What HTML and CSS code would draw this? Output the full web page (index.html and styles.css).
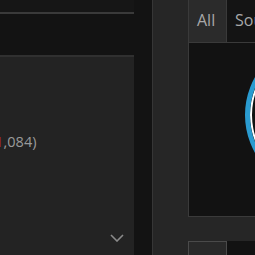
FILE: index.html
```html
<!DOCTYPE html>
<html>
<head>
<meta charset="utf-8">
<link rel="stylesheet" href="styles.css">
</head>
<body>
<div class="left">
  <div class="lt-top"></div>
  <div class="lt-mid"></div>
  <div class="card">
    <div class="count">(<span class="red">1</span>,084)</div>
    <svg class="chev" width="14" height="8" viewBox="0 0 14 8"><path d="M1 1 L7 7 L13 1" fill="none" stroke="#8a8a8a" stroke-width="1.6"/></svg>
  </div>
</div>
<div class="gap"></div>
<div class="right">
  <div class="tabs">
    <div class="tab active">All</div>
    <div class="tab">Sources</div>
  </div>
  <div class="box">
    <div class="ring"></div>
  </div>
  <div class="spacer"></div>
  <div class="tabs tabs2">
    <div class="tab active"></div>
    <div class="tab"></div>
  </div>
</div>
</body>
</html>
```
FILE: styles.css
```css
html, body {
  margin: 0;
  padding: 0;
}
body {
  width: 255px;
  height: 255px;
  overflow: hidden;
  display: flex;
  background: #131313;
  font-family: "Open Sans", "DejaVu Sans", sans-serif;
}
.left {
  width: 134px;
  flex: none;
  display: flex;
  flex-direction: column;
}
.lt-top {
  height: 12px;
  background: #161616;
  border-bottom: 2px solid #3a3a3a;
}
.lt-mid {
  height: 41px;
  background: #131313;
}
.card {
  flex: 1;
  background: #232323;
  border-top: 2px solid #303030;
  display: flex;
  flex-direction: column;
}
.count {
  margin-top: 75px;
  margin-left: -9px;
  font-size: 14.5px;
  color: #9a9a9a;
  white-space: nowrap;
}
.red {
  color: #a82a2a;
}
.chev {
  margin-top: auto;
  margin-bottom: 13px;
  align-self: flex-end;
  margin-right: 10px;
}
.gap {
  width: 18px;
  flex: none;
  background: #131313;
}
.right {
  flex: 1;
  min-width: 0;
  background: #262626;
  border-left: 1px solid #363636;
  padding-left: 35px;
  display: flex;
  flex-direction: column;
  overflow: hidden;
}
.tabs {
  display: flex;
  height: 42px;
  flex: none;
}
.tab {
  height: 42px;
  box-sizing: border-box;
  padding: 9px 8px 0 8px;
  font-size: 16px;
  color: #a8a8a8;
  background: #141414;
  white-space: nowrap;
}
.tab.active {
  width: 39px;
  flex: none;
  background: #2b2b2b;
  border-left: 1px solid #3a3a3a;
  border-right: 1px solid #3a3a3a;
}
.box {
  height: 175px;
  flex: none;
  box-sizing: border-box;
  background: #121212;
  border: 1px solid #3a3a3a;
  border-right: none;
  overflow: hidden;
}
.ring {
  width: 154px;
  height: 154px;
  box-sizing: border-box;
  margin-left: 56px;
  margin-top: -5px;
  border-radius: 50%;
  border: 5px solid #2a9bd0;
  box-shadow: inset 0 0 0 2px #ffffff;
}
.spacer {
  height: 24px;
  flex: none;
}
.tabs2 .tab {
  background: #121212;
  flex: 1;
}
.tabs2 .tab.active {
  flex: none;
  background: #292929;
  border: 1px solid #4a4a4a;
  border-bottom: none;
}
```
